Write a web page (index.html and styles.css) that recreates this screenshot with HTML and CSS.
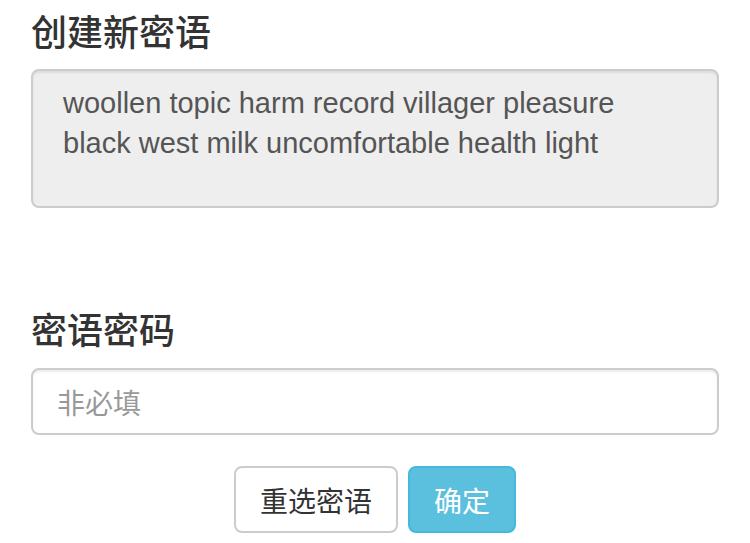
FILE: index.html
```html
<!DOCTYPE html>
<html lang="zh">
<head>
<meta charset="utf-8">
<link rel="stylesheet" href="styles.css">
</head>
<body>
<div class="page">
  <h1 class="title">创建新密语</h1>
  <div class="phrase">woollen topic harm record villager pleasure black west milk uncomfortable health light</div>
  <h1 class="title title-second">密语密码</h1>
  <input class="field" type="text" placeholder="非必填">
  <div class="actions">
    <button class="btn btn-default" type="button">重选密语</button>
    <button class="btn btn-info" type="button">确定</button>
  </div>
</div>
</body>
</html>
```
FILE: styles.css
```css
html, body {
  margin: 0;
  padding: 0;
  background: #fff;
}
.page {
  width: 688px;
  margin-left: 31px;
  padding-top: 6px;
  display: flex;
  flex-direction: column;
  font-family: "Liberation Sans", "Noto Sans CJK SC", sans-serif;
}
.title {
  margin: 0;
  font-family: "Noto Sans CJK SC", sans-serif;
  font-size: 36px;
  line-height: 48px;
  font-weight: 500;
  color: #333;
}
.title-second {
  margin-top: 96px;
}
.phrase {
  margin-top: 15px;
  box-sizing: border-box;
  height: 139px;
  padding: 12px 60px 0 30px;
  background: #eee;
  border: 2px solid #ccc;
  border-radius: 8px;
  box-shadow: inset 0 2px 2px rgba(0,0,0,0.075);
  font-size: 29px;
  line-height: 40px;
  color: #555;
}
.field {
  margin-top: 16px;
  box-sizing: border-box;
  width: 100%;
  height: 67px;
  padding: 0 24px;
  background: #fff;
  border: 2px solid #ccc;
  border-radius: 8px;
  box-shadow: inset 0 2px 2px rgba(0,0,0,0.075);
  font-family: "Noto Sans CJK SC", sans-serif;
  font-size: 28px;
  color: #555;
  outline: none;
}
.field::placeholder {
  color: #999;
}
.actions {
  margin-top: 31px;
  display: flex;
  justify-content: center;
  gap: 10px;
}
.btn {
  box-sizing: border-box;
  height: 67px;
  padding: 0 24px;
  border: 2px solid;
  border-radius: 8px;
  font-family: "Noto Sans CJK SC", sans-serif;
  font-size: 28px;
  line-height: 1;
}
.btn-default {
  background: #fff;
  border-color: #ccc;
  color: #333;
}
.btn-info {
  background: #5bc0de;
  border-color: #46b8da;
  color: #fff;
}
```
